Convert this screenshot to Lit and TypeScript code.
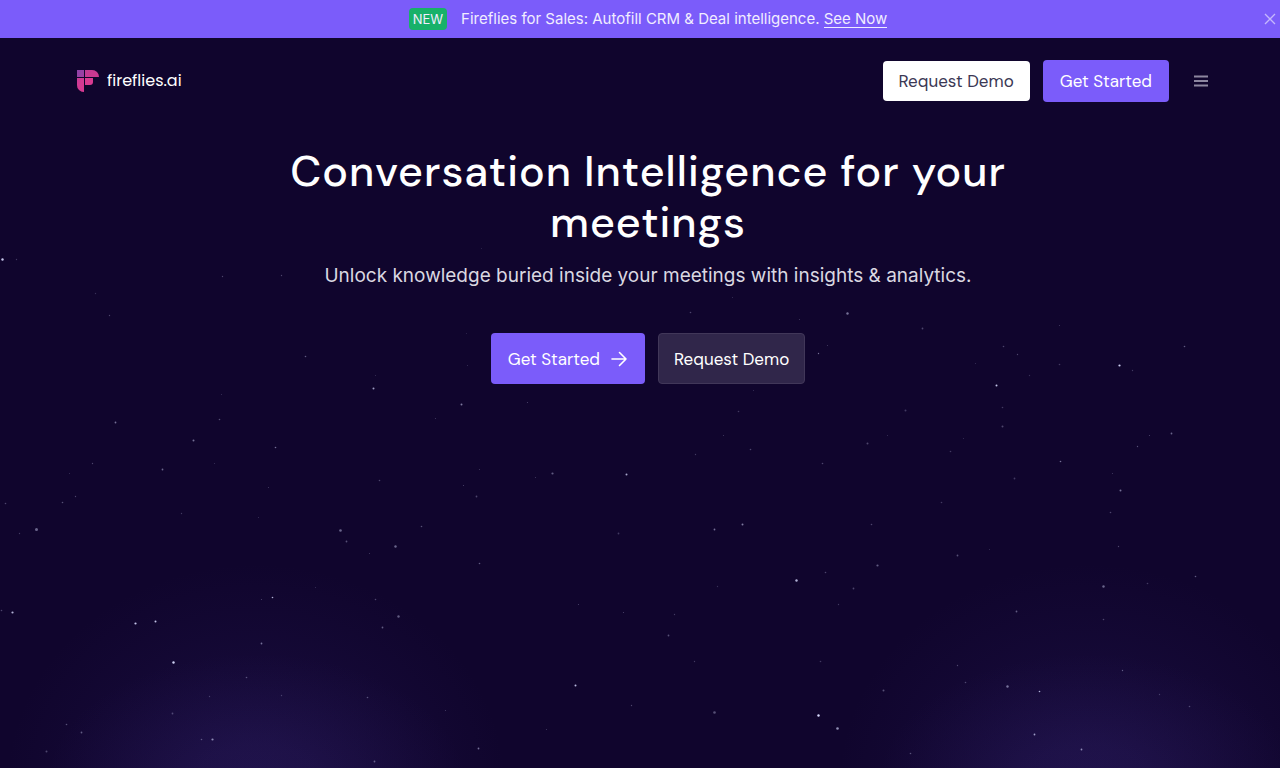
import { LitElement, html, svg, css } from "lit";
import { customElement } from "lit/decorators.js";

// Each star: x, y, radius, opacity on a 1280 x 768 sky.
const STARS: [number, number, number, number][] = [
  [2, 259, 1.2, 0.9], [16, 259, 0.7, 0.25], [222, 276, 0.7, 0.3], [281, 275, 0.7, 0.3],
  [95, 293, 0.7, 0.2], [109, 315, 0.7, 0.3], [305, 356, 0.8, 0.4], [373, 388, 1, 0.7],
  [375, 375, 0.6, 0.2], [461, 404, 1, 0.55], [221, 394, 0.6, 0.2], [219, 419, 0.8, 0.35],
  [115, 422, 0.9, 0.5], [193, 440, 1, 0.5], [275, 447, 0.8, 0.5], [162, 469, 0.9, 0.45],
  [92, 463, 0.7, 0.3], [214, 463, 0.6, 0.2], [69, 473, 0.6, 0.2], [379, 480, 0.8, 0.3],
  [268, 487, 0.6, 0.25], [75, 496, 0.7, 0.3], [62, 502, 0.8, 0.35], [5, 503, 0.8, 0.3],
  [181, 513, 0.7, 0.25], [36, 529, 1.5, 0.45], [19, 533, 0.7, 0.25], [340, 530, 1.3, 0.45],
  [258, 517, 0.6, 0.2], [421, 526, 0.8, 0.35], [527, 402, 0.6, 0.3], [435, 418, 0.6, 0.25],
  [479, 469, 0.6, 0.25], [552, 473, 1.1, 0.4], [535, 477, 0.6, 0.25], [626, 474, 1, 0.75],
  [463, 485, 0.6, 0.3], [476, 496, 0.9, 0.3], [618, 533, 0.9, 0.25], [481, 248, 0.6, 0.15],
  [466, 333, 0.6, 0.15], [467, 365, 0.6, 0.2], [732, 297, 0.6, 0.2], [690, 312, 0.8, 0.3],
  [847, 313, 1.2, 0.5], [799, 319, 0.6, 0.25], [922, 328, 0.9, 0.3], [818, 353, 0.7, 0.5],
  [827, 345, 0.6, 0.25], [1003, 346, 0.8, 0.3], [1017, 354, 0.7, 0.3], [1059, 325, 0.6, 0.25],
  [1184, 346, 0.8, 0.4], [1059, 364, 0.8, 0.25], [1119, 365, 1.1, 0.95], [1132, 370, 0.7, 0.25],
  [1029, 375, 0.7, 0.2], [996, 385, 1, 0.9], [975, 363, 0.6, 0.2], [1002, 407, 0.8, 0.25],
  [753, 390, 0.6, 0.2], [738, 411, 0.8, 0.25], [905, 410, 1, 0.25], [1002, 426, 1, 0.3],
  [723, 435, 0.6, 0.25], [887, 435, 0.6, 0.2], [867, 443, 1, 0.3], [750, 449, 0.8, 0.3],
  [695, 454, 0.7, 0.25], [822, 463, 0.8, 0.3], [950, 451, 0.8, 0.25], [963, 438, 0.6, 0.2],
  [1171, 433, 0.9, 0.45], [1149, 435, 0.6, 0.3], [1137, 446, 0.7, 0.35], [1060, 461, 0.8, 0.5],
  [1014, 478, 0.9, 0.25], [1112, 473, 0.6, 0.25], [1120, 490, 1, 0.5], [941, 502, 0.8, 0.25],
  [1110, 512, 0.8, 0.3], [742, 524, 1, 0.55], [714, 529, 0.9, 0.5], [871, 524, 0.8, 0.3],
  [346, 541, 0.9, 0.35], [395, 546, 1.2, 0.45], [369, 553, 0.6, 0.25], [479, 563, 0.8, 0.4],
  [315, 587, 0.6, 0.2], [272, 597, 0.8, 0.8], [261, 599, 0.6, 0.3], [375, 599, 0.8, 0.3],
  [1, 610, 0.8, 0.3], [12, 612, 1.1, 0.8], [135, 623, 1.1, 0.9], [155, 621, 1, 0.9],
  [398, 616, 1.2, 0.4], [382, 627, 0.9, 0.4], [261, 643, 0.9, 0.5], [173, 662, 1.2, 0.95],
  [246, 677, 0.8, 0.35], [209, 696, 0.7, 0.25], [281, 695, 0.7, 0.25], [367, 697, 0.8, 0.35],
  [172, 713, 0.9, 0.3], [66, 724, 0.8, 0.35], [81, 732, 0.9, 0.4], [201, 739, 0.8, 0.35],
  [212, 739, 1.1, 0.6], [46, 751, 1, 0.3], [374, 761, 0.9, 0.4], [445, 710, 0.6, 0.25],
  [478, 748, 0.9, 0.5], [546, 729, 0.6, 0.25], [575, 685, 1, 0.85], [578, 604, 0.6, 0.3],
  [623, 612, 0.6, 0.3], [631, 705, 0.7, 0.3], [796, 580, 1.2, 0.8], [825, 572, 0.8, 0.3],
  [877, 565, 1.1, 0.4], [957, 555, 0.9, 0.35], [989, 549, 0.6, 0.2], [853, 588, 0.9, 0.3],
  [838, 604, 0.7, 0.25], [717, 586, 0.7, 0.2], [674, 614, 0.7, 0.25], [668, 635, 0.9, 0.35],
  [694, 661, 0.7, 0.25], [820, 661, 0.8, 0.25], [1016, 611, 0.9, 0.4], [1103, 586, 1.2, 0.45],
  [1147, 583, 0.8, 0.25], [1195, 576, 0.8, 0.4], [1118, 546, 0.7, 0.3], [1103, 619, 0.8, 0.3],
  [957, 665, 0.7, 0.3], [965, 682, 0.8, 0.3], [883, 690, 1, 0.35], [1007, 686, 1.2, 0.5],
  [1039, 691, 0.8, 0.8], [1122, 670, 0.7, 0.4], [1159, 694, 0.7, 0.25], [1189, 706, 0.8, 0.3],
  [714, 712, 1.3, 0.35], [818, 715, 1.2, 1], [837, 728, 1.3, 0.65], [1034, 734, 0.9, 0.7],
  [1081, 749, 0.9, 0.6], [910, 753, 0.8, 0.35],
];

@customElement("app-root")
export class AppRoot extends LitElement {
  static styles = css`
    :host {
      display: block;
      position: relative;
      min-height: 100vh;
      overflow: hidden;
      background:
        radial-gradient(ellipse 210px 130px at 20% 102%, rgba(78, 58, 160, 0.12) 30%, transparent),
        radial-gradient(ellipse 250px 220px at 20% 102%, rgba(64, 48, 140, 0.2), transparent),
        radial-gradient(ellipse 210px 130px at 85% 102%, rgba(78, 58, 160, 0.12) 30%, transparent),
        radial-gradient(ellipse 250px 220px at 85% 102%, rgba(64, 48, 140, 0.2), transparent),
        #10052d;
      color: #fff;
      font-family: Inter, "Liberation Sans", sans-serif;
      --accent: #7b5cfa;
      --display: "DM Sans", "Open Sans", sans-serif;
    }
    * { box-sizing: border-box; }
    a { color: inherit; text-decoration: none; }
    .sky {
      position: absolute;
      inset: 0;
      width: 100%;
      height: 100%;
      pointer-events: none;
    }
    .banner {
      position: relative;
      display: flex;
      align-items: center;
      padding: 9px 0 9px 16px;
      background: var(--accent);
      font-size: 15px;
      line-height: 20px;
      color: #f1edff;
    }
    .message {
      flex: 1;
      display: flex;
      justify-content: center;
      align-items: center;
      gap: 14px;
      margin: -1px 0;
      padding-left: 20px;
    }
    .badge {
      padding: 1px 4px;
      border-radius: 4px;
      background: #17b169;
      font-size: 13px;
    }
    .see { border-bottom: 1px solid currentColor; line-height: 16px; display: inline-block; }
    button { font: inherit; cursor: pointer; }
    .icon {
      display: grid;
      place-items: center;
      width: 20px;
      height: 20px;
      padding: 0;
      border: 0;
      background: none;
      color: #c5b7fd;
    }
    .bar {
      position: relative;
      display: flex;
      align-items: center;
      gap: 13px;
      padding: 22px 69px 0 77px;
    }
    .logo {
      display: flex;
      align-items: center;
      gap: 8px;
      margin-right: auto;
      font-family: Poppins, Lato, sans-serif;
      font-size: 16px;
      line-height: 24px;
      font-weight: 400;
    }
    .btn {
      display: inline-flex;
      align-items: center;
      justify-content: center;
      gap: 10px;
      height: 51px;
      padding: 0 15px;
      border: 1px solid transparent;
      border-radius: 4px;
      font-family: var(--display);
      font-weight: 400;
      font-size: 17px;
      line-height: 22px;
      white-space: nowrap;
    }
    .primary { background: var(--accent); padding: 0 16px; }
    .light { background: #fff; color: #3b3854; height: 40px; }
    .nav { height: 42px; }
    .ghost { background: #30264a; border-color: #413759; }
    .menu { color: #8d87a0; margin-left: 9px; }
    .hero {
      position: relative;
      display: flex;
      flex-direction: column;
      align-items: center;
      padding: 44px 16px 64px 32px;
      text-align: center;
    }
    h1 {
      max-width: 800px;
      margin: 0;
      font-family: var(--display);
      font-weight: 500;
      font-size: 43px;
      line-height: 51px;
      letter-spacing: 1px;
    }
    .lead {
      margin: 14px 0 43px;
      font-size: 19px;
      line-height: 28px;
      color: #dad8e1;
    }
    .actions { display: flex; flex-wrap: wrap; justify-content: center; gap: 13px; }
  `;

  render() {
    return html`
      <svg class="sky" viewBox="0 0 1280 768" preserveAspectRatio="xMidYMin slice" aria-hidden="true">
        ${STARS.map(([x, y, r, o]) => svg`<circle cx=${x + 0.5} cy=${y + 0.5} r=${r} fill="#d9dcff" opacity=${o} />`)}
      </svg>
      <div class="banner">
        <p class="message">
          <span class="badge">NEW</span>
          <span>Fireflies for Sales: Autofill CRM &amp; Deal intelligence. <a class="see" href="#sales">See Now</a></span>
        </p>
        <button class="icon" type="button" aria-label="Close">
          <svg width="12" height="12" viewBox="0 0 12 12" fill="none" stroke="currentColor" stroke-width="1.3">
            <path d="M1 1l10 10M11 1L1 11" />
          </svg>
        </button>
      </div>
      <header class="bar">
        <a class="logo" href="#home">
          <svg width="22" height="22" viewBox="0 0 22 22" aria-hidden="true">
            <defs>
              <linearGradient id="mark" x1="0" y1="0" x2="1" y2="1">
                <stop offset="0" stop-color="#8c3fa6" />
                <stop offset="0.4" stop-color="#c93a94" />
                <stop offset="1" stop-color="#e2308a" />
              </linearGradient>
            </defs>
            <path fill="#8f43a8" d="M0 0h7v7H0z" />
            <path fill="#c8398f" d="M8 0h7a7 7 0 0 1 7 7H8z" />
            <path fill="#d93a92" d="M0 8h7v14a7 7 0 0 1-7-7z" />
            <path fill="#d93a92" d="M8 8h8v4a3 3 0 0 1-3 3H8z" />
            <path fill="url(#mark)" opacity="0.35" d="M0 0h7v7H0zM8 0h7a7 7 0 0 1 7 7H8zM0 8h7v14a7 7 0 0 1-7-7z" />
          </svg>
          <span>fireflies.ai</span>
        </a>
        <a class="btn light" href="#demo">Request Demo</a>
        <a class="btn primary nav" href="#start">Get Started</a>
        <button class="icon menu" type="button" aria-label="Menu">
          <svg width="14" height="12" viewBox="0 0 14 12" fill="none" stroke="currentColor" stroke-width="1.9">
            <path d="M0 1.500h14M0 6h14M0 10.500h14" />
          </svg>
        </button>
      </header>
      <main class="hero">
        <h1>Conversation Intelligence for your meetings</h1>
        <p class="lead">Unlock knowledge buried inside your meetings with insights &amp; analytics.</p>
        <div class="actions">
          <a class="btn primary" href="#start">
            Get Started
            <svg width="18" height="18" viewBox="0 0 18 18" fill="none" stroke="currentColor" stroke-width="1.6" stroke-linecap="round" stroke-linejoin="round">
              <path d="M2 9h14M9.500 2.500L16 9l-6.500 6.500" />
            </svg>
          </a>
          <a class="btn ghost" href="#demo">Request Demo</a>
        </div>
      </main>
    `;
  }
}
